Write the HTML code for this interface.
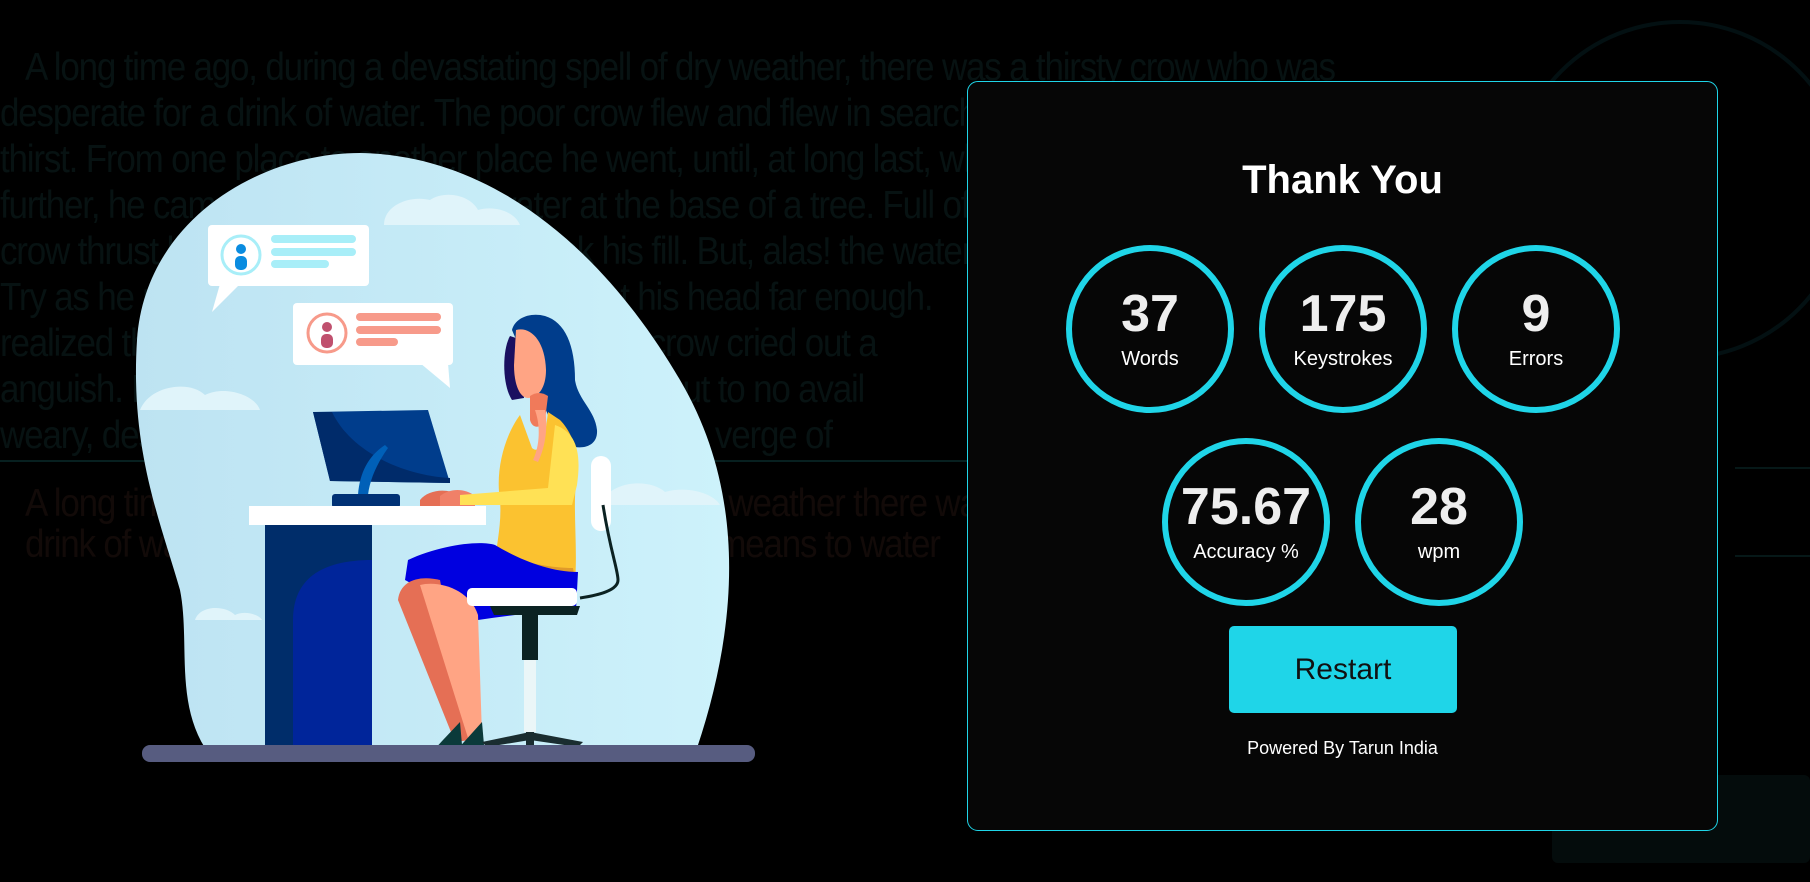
<!DOCTYPE html>
<html><head><meta charset="utf-8"><style>
html,body{margin:0;padding:0;background:#000;width:1810px;height:882px;overflow:hidden;font-family:"Liberation Sans",sans-serif}
.bg{position:absolute;left:0;top:0;width:1810px;height:882px}
.t{position:absolute;white-space:nowrap;font-size:35px;color:#071212;letter-spacing:-1.2px;transform:scaleY(1.1);transform-origin:0 0}
.t2{color:#120a08}
.panel{position:absolute;left:967px;top:81px;width:751px;height:750px;background:#060606;border:1px solid #1fd5e8;border-radius:11px;box-sizing:border-box}
.title{position:absolute;text-align:center;color:#fff;font-weight:bold;font-size:40px}
.c{position:absolute;width:168px;height:168px;border:6px solid #1fd5e8;border-radius:50%;box-sizing:border-box;color:#eee;text-align:center}
.c b{position:absolute;left:0;width:100%;top:35px;font-size:52px;line-height:56px}
.c span{position:absolute;left:0;width:100%;top:97px;font-size:20px;color:#fff}
.btn{position:absolute;left:1229px;top:626px;width:228px;height:87px;background:#1fd5e8;border-radius:5px;text-align:center;line-height:87px;font-size:30px;color:#111}
.pw{position:absolute;left:967px;width:751px;top:738px;text-align:center;color:#fff;font-size:18px}
</style></head><body>
<svg class="bg" width="1810" height="882">
<circle cx="1680" cy="190" r="168" fill="none" stroke="#031012" stroke-width="4"/>
<line x1="0" y1="461" x2="970" y2="461" stroke="#072020" stroke-width="2"/>
<line x1="1735" y1="468" x2="1810" y2="468" stroke="#061818" stroke-width="2"/>
<line x1="1735" y1="556" x2="1810" y2="556" stroke="#061818" stroke-width="2"/>
<rect x="1552" y="775" width="258" height="88" rx="6" fill="#040c0c"/>
</svg>
<div class="t" style="left:25px;top:46px">A long time ago, during a devastating spell of dry weather, there was a thirsty crow who was</div>
<div class="t" style="left:0;top:92px">desperate for a drink of water. The poor crow flew and flew in search of water to quench his</div>
<div class="t" style="left:0;top:138px">thirst. From one place to another place he went, until, at long last, when he could fly no</div>
<div class="t" style="left:0;top:184px">further, he came upon a pitcher of water at the base of a tree. Full of hope, the</div>
<div class="t" style="left:0;top:230px">crow thrust his beak in the pitcher to drink his fill. But, alas! the water was low.</div>
<div class="t" style="left:0;top:276px">Try as he might, the poor crow could not get his head far enough.</div>
<div class="t" style="left:0;top:322px">realized that he could not reach it. The thirsty crow cried out a</div>
<div class="t" style="left:0;top:368px">anguish. He tried and tried to reach the water. But to no avail</div>
<div class="t" style="left:0;top:414px">weary, desperate and thirsty, the crow was on the verge of</div>
<div class="t t2" style="left:25px;top:482px">A long time ago, during a devastating spell of dry weather there was a thirsty</div>
<div class="t t2" style="left:25px;top:523px">drink of water. The poor crow flew in search of a means to water</div>
<svg class="bg" width="1810" height="882">
<defs><linearGradient id="g" x1="0" x2="1"><stop offset="0" stop-color="#bde3f2"/><stop offset="1" stop-color="#cdf2fb"/></linearGradient></defs>
<path d="M205 748 C175 700 190 640 180 590 C160 520 130 450 137 340 C145 220 260 153 360 153 C500 155 610 260 680 380 C745 490 740 620 697 748 Z" fill="url(#g)"/>
<path d="M384 225 C384 205 410 195 430 200 C445 190 470 195 478 210 C495 205 515 212 520 225 Z" fill="#e0f4fa"/>
<path d="M140 410 C150 385 190 380 205 395 C225 385 255 395 260 410 Z" fill="#e0f4fa"/>
<path d="M600 505 C610 480 650 478 665 492 C690 485 715 495 720 505 Z" fill="#e0f4fa"/>
<path d="M195 620 C200 605 225 605 235 615 C245 610 260 615 262 620 Z" fill="#e0f4fa"/>
<rect x="208" y="225" width="161" height="61" rx="4" fill="#fff"/>
<path d="M220 284 L212 312 L240 284Z" fill="#fff"/>
<circle cx="241" cy="255" r="19" fill="none" stroke="#a8eef8" stroke-width="3"/>
<circle cx="241" cy="249" r="5" fill="#0a8ce0"/><rect x="235" y="256" width="12" height="14" rx="5" fill="#0a8ce0"/>
<rect x="271" y="235" width="85" height="8" rx="4" fill="#a8eef8"/><rect x="271" y="248" width="85" height="8" rx="4" fill="#a8eef8"/><rect x="271" y="260" width="58" height="8" rx="4" fill="#a8eef8"/>
<rect x="293" y="303" width="160" height="62" rx="4" fill="#fff"/>
<path d="M420 363 L450 388 L448 363Z" fill="#fff"/>
<circle cx="327" cy="333" r="19" fill="none" stroke="#f79a8a" stroke-width="3"/>
<circle cx="327" cy="327" r="5" fill="#c0506e"/><rect x="321" y="334" width="12" height="14" rx="5" fill="#c0506e"/>
<rect x="356" y="313" width="85" height="8" rx="4" fill="#f79a8a"/><rect x="356" y="326" width="85" height="8" rx="4" fill="#f79a8a"/><rect x="356" y="338" width="42" height="8" rx="4" fill="#f79a8a"/>
<path d="M313 412 L428 410 L450 483 L330 481Z" fill="#003d8c"/>
<path d="M313 412 L332 412 C350 450 400 475 450 478 L450 483 L330 481Z" fill="#002b6a"/>
<path d="M358 495 C360 470 370 455 385 445 L388 448 C378 462 370 478 368 495Z" fill="#0060b8"/>
<rect x="332" y="494" width="68" height="14" rx="3" fill="#003175"/>
<path d="M420 500 C428 490 445 488 458 494 L458 508 L420 508Z" fill="#e56f55"/>
<path d="M440 496 C450 488 465 488 475 496 L475 508 L440 508Z" fill="#f08068"/>
<rect x="249" y="506" width="237" height="19" fill="#fff"/>
<rect x="265" y="525" width="107" height="225" fill="#002d6a"/>
<path d="M293 750 L293 620 C293 580 320 560 372 560 L372 750Z" fill="#00259a"/>
<!-- hair back -->
<path d="M512 330 C515 318 530 312 545 316 C565 322 575 345 575 380 C578 400 595 410 597 430 C598 445 585 450 570 446 C555 442 550 430 548 415 Z" fill="#003d8c"/>
<path d="M510 336 C502 350 502 385 512 400 L524 398 L522 340Z" fill="#1a1060"/>
<path d="M516 330 C530 326 545 340 546 370 C546 388 538 398 528 398 C520 398 514 385 514 365Z" fill="#ffa484"/>
<path d="M530 396 C536 392 542 392 548 396 L545 420 C540 430 532 428 530 420Z" fill="#f07a5a"/>
<!-- torso -->
<path d="M520 415 C505 435 495 470 500 500 C502 525 496 545 495 565 L575 582 C578 545 572 505 577 475 C580 450 570 430 560 420 L548 412 C545 440 540 455 532 448 Z" fill="#fbc230"/>
<path d="M535 410 C542 430 538 450 533 460 L538 462 C546 446 548 425 545 410Z" fill="#ffa484"/>
<path d="M555 425 C575 432 582 450 577 485 L572 505 L460 505 L460 495 L548 488 Z" fill="#ffe155"/>
<path d="M500 553 C520 562 550 568 573 568 L575 580 L520 580Z" fill="#e09a2a"/>
<path d="M408 560 C440 545 480 540 495 545 C520 560 550 572 578 572 L576 610 C540 612 510 615 478 620 L405 580 Z" fill="#0000e0"/>
<path d="M398 600 C400 580 420 575 440 580 L470 740 L455 742 Z" fill="#e56f55"/>
<path d="M420 585 C440 580 470 590 478 615 L482 735 L468 738 Z" fill="#ffa484"/>
<path d="M443 740 L460 722 L462 745 L432 752Z" fill="#0b3a3a"/>
<path d="M464 742 L482 722 L484 745 L455 752Z" fill="#0b3a3a"/>
<rect x="591" y="456" width="20" height="75" rx="10" fill="#fff"/>
<path d="M603 505 C610 550 618 570 618 580 C618 590 600 595 580 598" stroke="#0b2222" stroke-width="3" fill="none"/>
<rect x="467" y="588" width="110" height="18" rx="5" fill="#fff"/>
<path d="M490 606 L580 606 L577 615 L494 615Z" fill="#0b2222"/>
<rect x="522" y="615" width="16" height="45" fill="#0b2222"/>
<rect x="524" y="660" width="12" height="72" fill="#eaf6f8"/>
<path d="M530 732 L482 742 L487 747 L530 740 L578 747 L583 742 Z" fill="#1a2d30"/>
<rect x="526" y="732" width="8" height="14" fill="#1a2d30"/>
<rect x="142" y="745" width="613" height="17" rx="8" fill="#575c80"/>
</svg>
<div class="panel"></div>
<div class="title" style="left:967px;width:751px;top:158px">Thank You</div>
<div class="c" style="left:1066px;top:245px"><b>37</b><span>Words</span></div>
<div class="c" style="left:1259px;top:245px"><b>175</b><span>Keystrokes</span></div>
<div class="c" style="left:1452px;top:245px"><b>9</b><span>Errors</span></div>
<div class="c" style="left:1162px;top:438px"><b>75.67</b><span>Accuracy %</span></div>
<div class="c" style="left:1355px;top:438px"><b>28</b><span>wpm</span></div>
<div class="btn">Restart</div>
<div class="pw">Powered By Tarun India</div>
</body></html>
